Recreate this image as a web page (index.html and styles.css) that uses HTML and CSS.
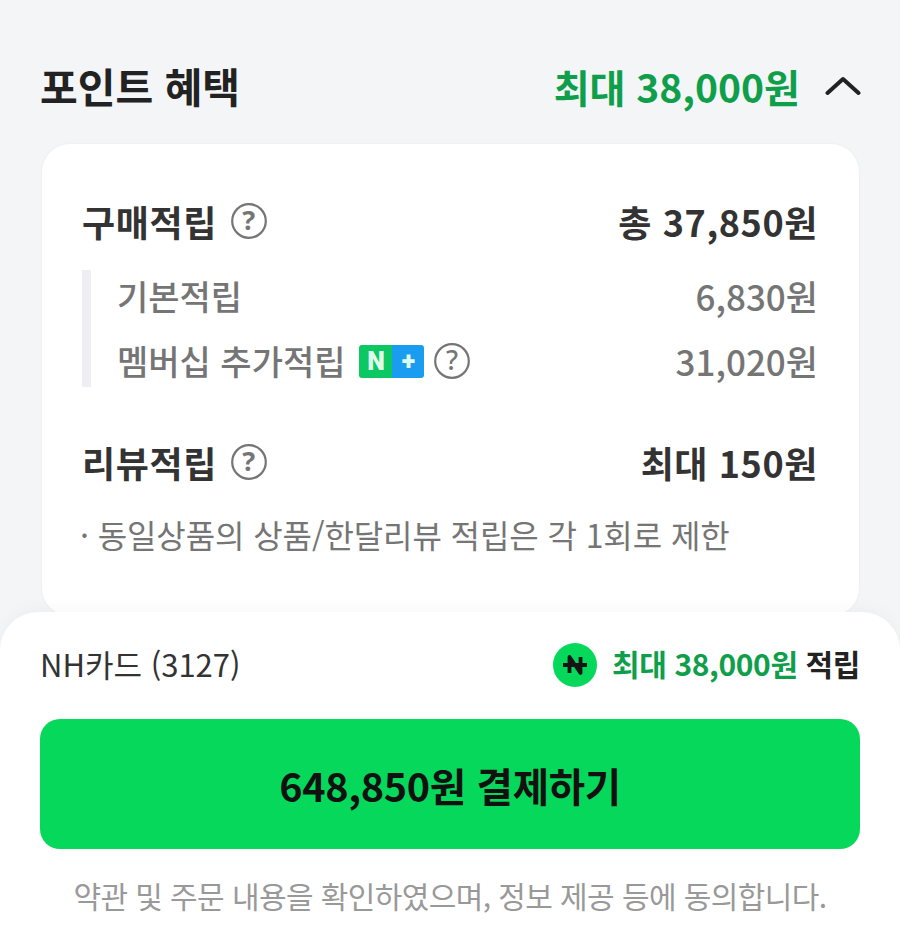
FILE: index.html
```html
<!DOCTYPE html>
<html lang="ko">
<head>
  <meta charset="UTF-8" />
  <meta name="viewport" content="width=device-width, initial-scale=1.0" />
  <title>포인트 혜택</title>
  <link rel="stylesheet" href="styles.css">
</head>
<body>
  <div class="page">
    <!-- 포인트 혜택 -->
    <div class="benefit-head">
      <h2>포인트 혜택</h2>
      <div class="benefit-max">
        <span>최대 38,000원</span>
        <svg class="chevron" width="36" height="20" viewBox="0 0 36 20"><path d="M2.500 17 L18 3 L33.500 17" fill="none" stroke="#222" stroke-width="4" stroke-linecap="round" stroke-linejoin="round"/></svg>
      </div>
    </div>

    <div class="card">
      <div class="row row-main">
        <div class="row-label">구매적립
          <svg class="help" width="36" height="36" viewBox="0 0 36 36"><circle cx="18" cy="18" r="16.800" fill="none" stroke="#757575" stroke-width="2.200"/><text x="18" y="27" text-anchor="middle" class="help-mark">?</text></svg>
        </div>
        <div>총 37,850원</div>
      </div>
      <div class="sub-list">
        <div class="row row-sub">
          <div class="row-label">기본적립</div>
          <div class="sub-value">6,830원</div>
        </div>
        <div class="row row-sub">
          <div class="row-label">멤버십 추가적립
            <span class="nplus"><span class="nplus-n">N</span><span class="nplus-p">+</span></span>
            <svg class="help" width="36" height="36" viewBox="0 0 36 36"><circle cx="18" cy="18" r="16.800" fill="none" stroke="#757575" stroke-width="2.200"/><text x="18" y="27" text-anchor="middle" class="help-mark">?</text></svg>
          </div>
          <div class="sub-value">31,020원</div>
        </div>
      </div>
      <div class="row row-main row-review">
        <div class="row-label">리뷰적립
          <svg class="help" width="36" height="36" viewBox="0 0 36 36"><circle cx="18" cy="18" r="16.800" fill="none" stroke="#757575" stroke-width="2.200"/><text x="18" y="27" text-anchor="middle" class="help-mark">?</text></svg>
        </div>
        <div>최대 150원</div>
      </div>
      <p class="note">· 동일상품의 상품/한달리뷰 적립은 각 1회로 제한</p>
    </div>

    <!-- 하단 결제 -->
    <div class="pay-sheet">
      <div class="pay-info">
        <span class="pay-card">NH카드 (3127)</span>
        <span class="pay-point">
          <svg class="nh-icon" width="46" height="46" viewBox="0 0 46 46"><circle cx="23" cy="23" r="22" fill="#06d85b"/><path d="M11 23 H35 M17.500 31 V15 L28.500 31 V15" fill="none" stroke="#151515" stroke-width="3.800" stroke-linejoin="round"/></svg>
          <b>최대 38,000원</b>&nbsp;<em>적립</em>
        </span>
      </div>
      <button class="pay-btn">648,850원 결제하기</button>
      <p class="agree">약관 및 주문 내용을 확인하였으며, 정보 제공 등에 동의합니다.</p>
    </div>
  </div>
</body>
</html>
```

FILE: styles.css
```css
* {
  box-sizing: border-box;
}

html, body {
  margin: 0;
  padding: 0;
}

body {
  font-family: "Noto Sans CJK KR", "Noto Sans", sans-serif;
  background-color: #f3f5f7;
  color: #333;
}

.page {
  width: 900px;
  height: 945px;
  overflow: hidden;
  padding-top: 56px;
}

.benefit-head {
  display: flex;
  justify-content: space-between;
  align-items: center;
  height: 60px;
  padding: 0 39px 0 40px;
}

.benefit-head h2 {
  margin: -2px 0 0;
  font-size: 41px;
  line-height: 60px;
  font-weight: 700;
  color: #222;
}

.benefit-max {
  display: flex;
  align-items: center;
  gap: 25px;
  font-size: 39px;
  line-height: 60px;
  font-weight: 700;
  color: #0f9f4b;
}

.card {
  margin: 28px 41px 0 42px;
  height: 472px;
  padding: 52px 41px 0 40px;
  background: #fff;
  border-radius: 28px;
  box-shadow: 0 0 3px rgba(0, 0, 0, 0.05);
}

.row {
  display: flex;
  justify-content: space-between;
  align-items: center;
}

.row-label {
  display: flex;
  align-items: center;
  gap: 14px;
}

.row-main {
  height: 50px;
  font-size: 36px;
  line-height: 50px;
  font-weight: 700;
  letter-spacing: 0.6px;
  color: #333;
}

.help {
  overflow: visible;
}

.sub-list {
  display: flex;
  flex-direction: column;
  justify-content: center;
  margin-top: 24px;
  padding-left: 26px;
  border-left: 9px solid #eeeef4;
  height: 117px;
}

.row-sub {
  flex: none;
  height: 65px;
  font-size: 34px;
  line-height: 50px;
  font-weight: 500;
  color: #757575;
}

.sub-value {
  font-size: 35px;
}

.nplus + .help {
  margin-left: -4px;
}

.row-review {
  margin-top: 50px;
}

.help-mark {
  font-family: "Noto Sans", sans-serif;
  font-size: 27px;
  fill: #757575;
}

.nplus {
  display: flex;
  width: 65px;
  height: 33px;
  font-family: Roboto, sans-serif;
  font-size: 25px;
  font-weight: 900;
  line-height: 33px;
  text-align: center;
  color: #dffbe9;
}

.nplus-n {
  width: 33px;
  background: #0cc862;
  border-radius: 3px 0 0 3px;
}

.nplus-p {
  width: 32px;
  background: #1a9cf0;
  border-radius: 0 3px 3px 0;
}

.note {
  margin: 24px 0 0 -2px;
  font-size: 32px;
  line-height: 46px;
  letter-spacing: -0.1px;
  color: #757575;
}

.pay-sheet {
  position: absolute;
  left: 0;
  top: 612px;
  width: 900px;
  height: 333px;
  padding: 0 40px;
  background: #fff;
  border-radius: 38px 38px 0 0;
  box-shadow: 0 -4px 16px rgba(0, 0, 0, 0.03);
}

.pay-info {
  display: flex;
  justify-content: space-between;
  align-items: center;
  height: 107px;
}

.pay-card {
  margin-top: -4px;
  font-size: 31px;
  line-height: 46px;
  color: #333;
}

.pay-point {
  display: flex;
  align-items: center;
  margin-top: -1px;
  font-size: 30px;
  line-height: 46px;
  letter-spacing: -0.4px;
  color: #222;
}

.nh-icon {
  margin-right: 14px;
}

.pay-point b {
  margin-bottom: 4px;
  color: #0f9f4b;
}

.pay-point em {
  margin-bottom: 4px;
  font-style: normal;
  font-weight: 700;
}

.pay-btn {
  display: block;
  width: 820px;
  height: 130px;
  border: none;
  border-radius: 20px;
  background-color: #06d85b;
  font-family: inherit;
  font-size: 39.500px;
  font-weight: 700;
  letter-spacing: -0.3px;
  color: #111;
}

.agree {
  margin: 24px 0 0;
  text-align: center;
  font-size: 30px;
  line-height: 44px;
  letter-spacing: -0.6px;
  color: #999;
}
```
